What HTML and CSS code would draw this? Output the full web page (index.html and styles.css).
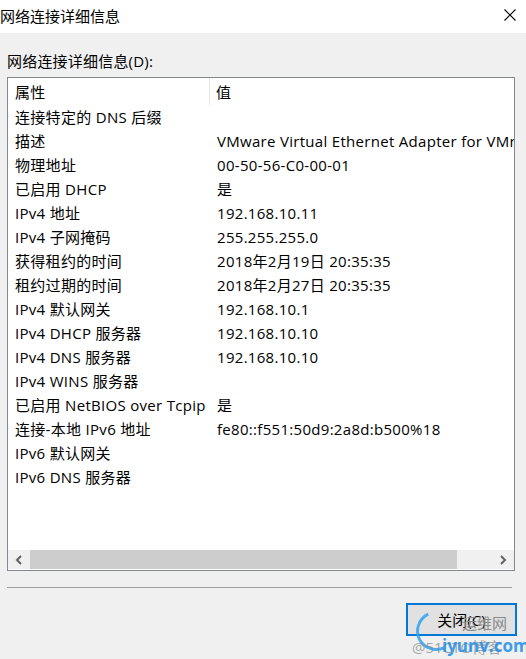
FILE: index.html
```html
<!DOCTYPE html>
<html lang="zh-CN">
<head>
  <meta charset="UTF-8">
  <title>网络连接详细信息</title>
  <link rel="stylesheet" href="styles.css">
</head>

<body>
  <div class="dialog">
    <header class="titlebar">
      <div class="title">网络连接详细信息</div>
      <div class="close">
        <svg width="12" height="12" viewBox="0 0 12 12">
          <path d="M0.5 0.5 L11.5 11.5 M11.5 0.5 L0.5 11.5" stroke="#000" stroke-width="1.1" fill="none"/>
        </svg>
      </div>
    </header>

    <div class="content">
      <div class="label">网络连接详细信息(D):</div>

      <div class="listbox">
        <div class="list-head">
          <div class="col-prop">属性</div>
          <div class="col-val head-val">值</div>
        </div>

        <div class="list-body">
          <div class="row"><div class="col-prop">连接特定的 DNS 后缀</div><div class="col-val"></div></div>
          <div class="row"><div class="col-prop">描述</div><div class="col-val">VMware Virtual Ethernet Adapter for VMnet1</div></div>
          <div class="row"><div class="col-prop">物理地址</div><div class="col-val">00-50-56-C0-00-01</div></div>
          <div class="row"><div class="col-prop">已启用 DHCP</div><div class="col-val">是</div></div>
          <div class="row"><div class="col-prop">IPv4 地址</div><div class="col-val">192.168.10.11</div></div>
          <div class="row"><div class="col-prop">IPv4 子网掩码</div><div class="col-val">255.255.255.0</div></div>
          <div class="row"><div class="col-prop">获得租约的时间</div><div class="col-val">2018年2月19日 20:35:35</div></div>
          <div class="row"><div class="col-prop">租约过期的时间</div><div class="col-val">2018年2月27日 20:35:35</div></div>
          <div class="row"><div class="col-prop">IPv4 默认网关</div><div class="col-val">192.168.10.1</div></div>
          <div class="row"><div class="col-prop">IPv4 DHCP 服务器</div><div class="col-val">192.168.10.10</div></div>
          <div class="row"><div class="col-prop">IPv4 DNS 服务器</div><div class="col-val">192.168.10.10</div></div>
          <div class="row"><div class="col-prop">IPv4 WINS 服务器</div><div class="col-val"></div></div>
          <div class="row"><div class="col-prop">已启用 NetBIOS over Tcpip</div><div class="col-val">是</div></div>
          <div class="row"><div class="col-prop">连接-本地 IPv6 地址</div><div class="col-val">fe80::f551:50d9:2a8d:b500%18</div></div>
          <div class="row"><div class="col-prop">IPv6 默认网关</div><div class="col-val"></div></div>
          <div class="row"><div class="col-prop">IPv6 DNS 服务器</div><div class="col-val"></div></div>
        </div>

        <!-- horizontal scrollbar -->
        <div class="hscroll">
          <div class="arrow">
            <svg width="8" height="10" viewBox="0 0 8 10"><path d="M6 1 L2 5 L6 9" stroke="#606060" stroke-width="2" fill="none"/></svg>
          </div>
          <div class="track">
            <div class="thumb"></div>
          </div>
          <div class="arrow">
            <svg width="8" height="10" viewBox="0 0 8 10"><path d="M2 1 L6 5 L2 9" stroke="#606060" stroke-width="2" fill="none"/></svg>
          </div>
        </div>
      </div>

      <div class="separator"></div>

      <div class="buttons">
        <button class="btn">关闭(C)</button>
      </div>
    </div>

    <!-- watermark over the button -->
    <div class="watermark">
      <div class="swirl"></div>
      <div class="wm-cn">运维网</div>
      <div class="wm-blog">@51CTO博客</div>
      <div class="wm-url">iyunv.com</div>
    </div>
  </div>
</body>
</html>
```

FILE: styles.css
```css
body {
  margin: 0;
  padding: 0;
  background-color: #f0f0f0;
  font-family: "Open Sans", "Noto Sans CJK SC", sans-serif;
  font-size: 15px;
  color: #000;
}

.dialog {
  position: relative;
  width: 526px;
  height: 659px;
  overflow: hidden;
}

.titlebar {
  display: flex;
  justify-content: space-between;
  align-items: center;
  height: 33px;
  background-color: #fff;
}

.title {
  line-height: 33px;
}

.close {
  display: flex;
  align-items: center;
  padding-right: 10px;
  margin-top: -4px;
}

.content {
  padding: 0 11px 0 7px;
}

.label {
  height: 44px;
  line-height: 20px;
  padding-top: 18px;
  box-sizing: border-box;
  letter-spacing: 0.2px;
}

.listbox {
  height: 494px;
  border: 1px solid #828790;
  background-color: #fff;
  box-sizing: border-box;
  display: flex;
  flex-direction: column;
  overflow: hidden;
  letter-spacing: 0.3px;
}

.list-head {
  display: flex;
  height: 27px;
  align-items: center;
  flex-shrink: 0;
}

.list-head .col-prop {
  border-right: 1px solid #e5e5e5;
  height: 27px;
  line-height: 28px;
}

.list-body {
  flex: 1;
}

.row {
  display: flex;
  height: 24px;
  line-height: 24px;
}

.col-prop {
  width: 202px;
  padding-left: 7px;
  box-sizing: border-box;
  flex-shrink: 0;
  white-space: nowrap;
}

.col-val {
  padding-left: 7px;
  white-space: nowrap;
}

.head-val {
  padding-left: 6px;
}

.hscroll {
  display: flex;
  height: 19px;
  margin-bottom: 1px;
  background-color: #f0f0f0;
  flex-shrink: 0;
}

.arrow {
  width: 22px;
  display: flex;
  align-items: center;
  justify-content: center;
}

.track {
  flex: 1;
  display: flex;
}

.thumb {
  width: 427px;
  background-color: #cdcdcd;
}

.separator {
  margin-top: 16px;
  height: 1px;
  background-color: #a0a0a0;
  margin-right: 3px;
}

.buttons {
  display: flex;
  justify-content: flex-end;
  padding-top: 15px;
}

.btn {
  width: 111px;
  height: 33px;
  margin-right: -2px;
  border: 2px solid #0078d7;
  background-color: #e1e1e1;
  font-family: "Open Sans", "Noto Sans CJK SC", sans-serif;
  font-size: 15px;
  color: #000;
  padding: 0;
}

/* watermark */
.watermark {
  position: absolute;
  left: 408px;
  top: 606px;
  width: 118px;
  height: 53px;
  pointer-events: none;
}

.swirl {
  position: absolute;
  left: 8px;
  top: 5px;
  width: 34px;
  height: 34px;
  border-radius: 50%;
  border: 3px solid transparent;
  border-left-color: #2ea3f2;
  border-bottom-color: #2ea3f2;
  transform: rotate(20deg);
  opacity: 0.85;
}

.wm-cn {
  position: absolute;
  left: 54px;
  top: 6px;
  font-size: 15px;
  color: #8a8a8a;
}

.wm-blog {
  position: absolute;
  left: 4px;
  top: 30px;
  font-size: 15px;
  color: #888;
  opacity: 0.7;
}

.wm-url {
  position: absolute;
  left: 34px;
  top: 28px;
  font-size: 17px;
  font-weight: bold;
  color: #1e8fe8;
  opacity: 0.85;
}
```
